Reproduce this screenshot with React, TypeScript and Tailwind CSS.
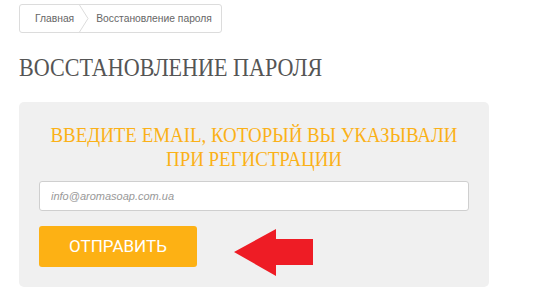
const ArrowLeft = () => (
    <svg width="80" height="48" viewBox="0 0 80 48" className="block">
        <path d="M0 23 L42 0 L42 10 L79 10 L79 36 L42 36 L42 47 Z" fill="#ee1c25" />
    </svg>
);

const App = () => {
    return (
        <div className="w-[550px] h-[305px] bg-white pl-[19px] pt-[4px] font-['Liberation_Sans',Arial,sans-serif] overflow-hidden">
            {/* Breadcrumbs */}
            <div className="inline-flex items-stretch h-[29px] border border-[#dcdcdc] rounded-[3px] text-[10.3px] text-[#666]">
                <span className="flex items-center pl-[15px] pr-[5px]">Главная</span>
                <svg width="10" height="27" viewBox="0 0 10 27" className="block">
                    <path d="M0.5 0 L9 13.5 L0.5 27" fill="none" stroke="#dcdcdc" strokeWidth="1" />
                </svg>
                <span className="flex items-center pl-[7px] pr-[9px]">Восстановление пароля</span>
            </div>

            {/* Title */}
            <h1 className="mt-[20px] text-[26px] leading-[30px] text-[#555] font-['Liberation_Serif',serif] whitespace-nowrap scale-x-[0.85] origin-left">
                ВОССТАНОВЛЕНИЕ ПАРОЛЯ
            </h1>

            {/* Form panel */}
            <div className="mt-[19px] w-[470px] bg-[#f0f0f0] rounded-[5px] px-[20px] pt-[21px] pb-[10px]">
                <h2 className="-mx-[20px] text-center text-[21px] leading-[24px] text-[#fbb117] font-['Liberation_Serif',serif] whitespace-nowrap scale-x-[0.9]">
                    ВВЕДИТЕ EMAIL, КОТОРЫЙ ВЫ УКАЗЫВАЛИ<br />ПРИ РЕГИСТРАЦИИ
                </h2>
                <input
                    type="text"
                    placeholder="info@aromasoap.com.ua"
                    className="mt-[10px] block w-full h-[30px] bg-white border border-[#cfcfcf] rounded-[3px] px-[11px] text-[11px] italic placeholder:text-[#999] outline-none"
                />
                <div className="mt-[15px] flex items-start">
                    <button className="w-[158px] h-[41px] bg-[#fdb114] rounded-[3px] text-white text-[17px] font-['Roboto',sans-serif]">
                        ОТПРАВИТЬ
                    </button>
                    <div className="ml-[37px] mt-[3px]">
                        <ArrowLeft />
                    </div>
                </div>
            </div>
        </div>
    );
};

export default App;
